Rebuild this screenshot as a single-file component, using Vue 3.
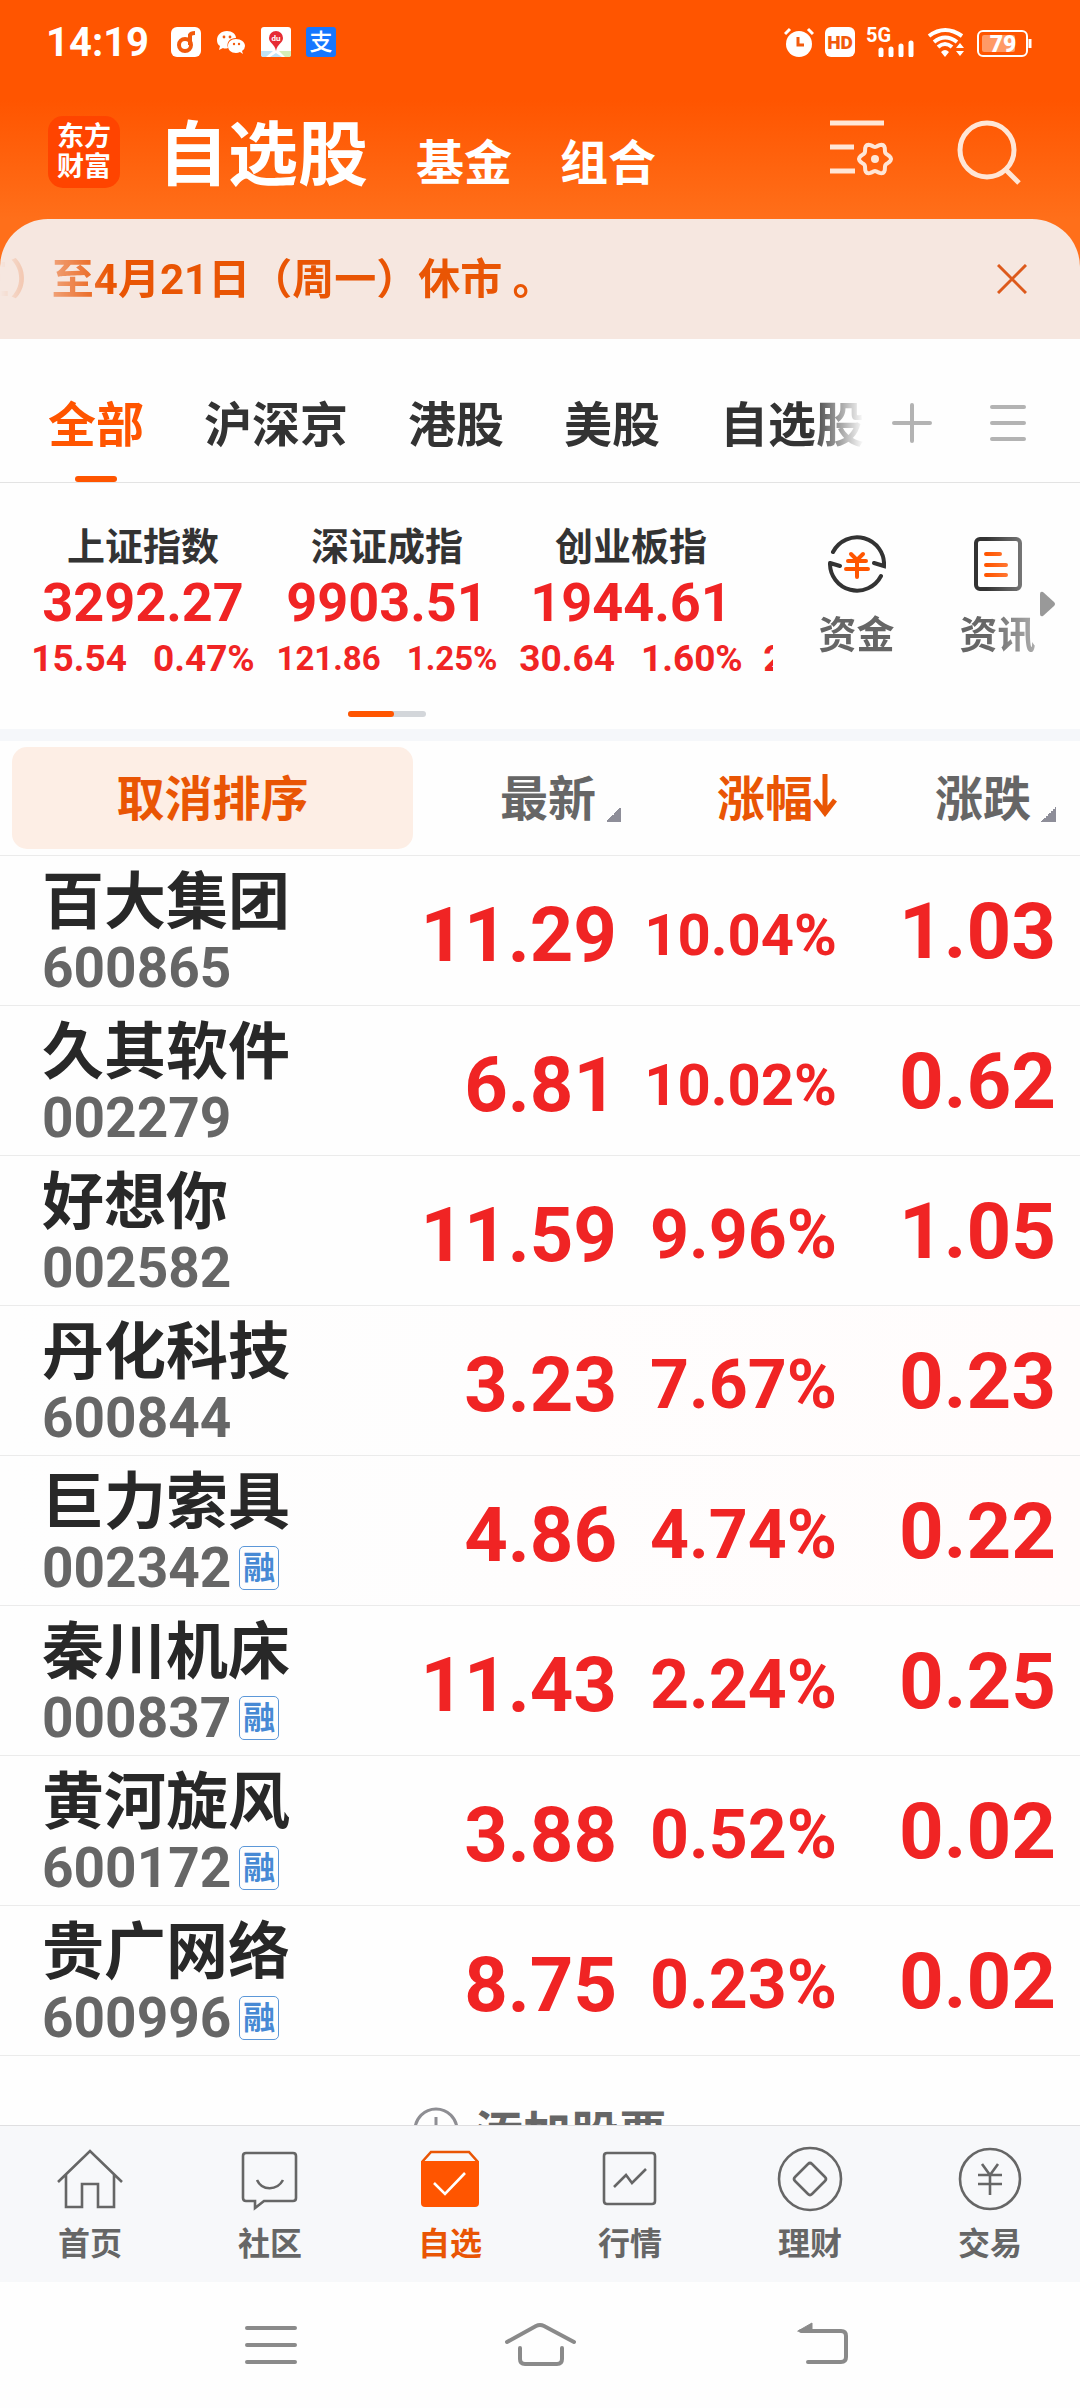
<script setup>
import { ref, computed } from 'vue'

const markets = ['全部', '沪深京', '港股', '美股', '自选股']
const activeMarket = ref('全部')

const indices = [
  { name: '上证指数', value: '3292.27', change: '15.54', percent: '0.47%' },
  { name: '深证成指', value: '9903.51', change: '121.86', percent: '1.25%' },
  { name: '创业板指', value: '1944.61', change: '30.64', percent: '1.60%' },
  { name: '', value: '', change: '22.58', percent: '0.26%' }
]

const stocks = [
  { name: '百大集团', code: '600865', price: '11.29', percent: '10.04%', change: '1.03' },
  { name: '久其软件', code: '002279', price: '6.81', percent: '10.02%', change: '0.62' },
  { name: '好想你', code: '002582', price: '11.59', percent: '9.96%', change: '1.05' },
  { name: '丹化科技', code: '600844', price: '3.23', percent: '7.67%', change: '0.23', flash: true },
  { name: '巨力索具', code: '002342', price: '4.86', percent: '4.74%', change: '0.22', margin: true, flash: true },
  { name: '秦川机床', code: '000837', price: '11.43', percent: '2.24%', change: '0.25', margin: true },
  { name: '黄河旋风', code: '600172', price: '3.88', percent: '0.52%', change: '0.02', margin: true },
  { name: '贵广网络', code: '600996', price: '8.75', percent: '0.23%', change: '0.02', margin: true }
]

const activePage = ref('自选')
const pages = [
  { name: '首页', d: 'M1 36L33 5L65 36M9 29V61H25V38H41V61H57V29' },
  { name: '社区', d: 'M9 7H56Q59 7 59 10V52Q59 55 56 55H27L18 62V55H9Q6 55 6 52V10Q6 7 9 7ZM20 34C25 45 40 45 46 34' },
  { name: '自选', d: 'M5 16L14 6H52L61 16', fill: 'M4 15H62V57Q62 61 58 61H8Q4 61 4 57Z', check: 'M17 37L28 48L48 27' },
  { name: '行情', d: 'M10 7H55Q58 7 58 10V55Q58 58 55 58H10Q7 58 7 55V10Q7 7 10 7ZM17 41L29 29L35 37L49 23' },
  { name: '理财', d: 'M33 2A31 31 0 1 1 33 64A31 31 0 1 1 33 2ZM31 18Q33 16 35 18L48 31Q50 33 48 35L35 48Q33 50 31 48L18 35Q16 33 18 31Z' },
  { name: '交易', d: 'M33 3A30 30 0 1 1 33 63A30 30 0 1 1 33 3ZM25 18L33 29L41 18M21 29H45M21 38H45M33 29V49' }
]

// six-lobed gear of the list settings icon
const gearPath = computed(() => {
  const points = []
  for (let a = 0; a < 360; a += 6) {
    const t = (a * Math.PI) / 180
    const r = 14 + 2 * Math.cos(6 * t)
    points.push(`${(45 + r * Math.cos(t)).toFixed(1)} ${(40 + r * Math.sin(t)).toFixed(1)}`)
  }
  return `M${points.join('L')}Z`
})
</script>

<template>
  <div class="app">
    <header class="top">
      <div class="status">
        <span class="clock">14:19</span>
        <div class="notices">
          <svg width="30" height="30" viewBox="0 0 30 30">
            <rect width="30" height="30" rx="6" fill="#fff" />
            <circle cx="14" cy="18" r="6" fill="none" stroke="#f25a0c" stroke-width="4" />
            <path d="M19 18V8Q20 6 24 6" fill="none" stroke="#f25a0c" stroke-width="4" />
          </svg>
          <svg width="30" height="30" viewBox="0 0 30 30">
            <path d="M11 4C5 4 1 8 1 13C1 16 2 18 4 19L3 23L7 21Q9 22 12 21C10 15 14 11 20 11C20 7 16 4 11 4Z" fill="#fff" />
            <path d="M20 12C15 12 12 15 12 19C12 23 15 26 20 26Q22 26 24 25L27 27L26 24Q29 22 29 19C29 15 25 12 20 12Z" fill="#fff" />
            <g fill="#f25a0c">
              <circle cx="8" cy="10" r="1.4" />
              <circle cx="14" cy="10" r="1.4" />
              <circle cx="18" cy="17" r="1.2" />
              <circle cx="23" cy="17" r="1.2" />
            </g>
          </svg>
          <svg width="30" height="30" viewBox="0 0 30 30">
            <rect width="30" height="30" rx="3" fill="#fff" />
            <path d="M0 24H12L5 30H2Q0 30 0 28Z" fill="#bfe3f7" />
            <path d="M18 24H30V28Q30 30 28 30H24Z" fill="#d5efb8" />
            <path d="M15 26L21 30H9Z" fill="#bfe3f7" />
            <path d="M15 4A7 7 0 0 1 22 11C22 16 16 17 15 24C14 17 8 16 8 11A7 7 0 0 1 15 4Z" fill="#e62b34" />
            <text x="15" y="14" text-anchor="middle" font-size="8" fill="#fff">du</text>
          </svg>
          <svg width="30" height="30" viewBox="0 0 30 30">
            <rect width="30" height="30" rx="3" fill="#1677ff" />
            <text x="15" y="23" text-anchor="middle" font-size="23" font-weight="500" fill="#fff">支</text>
          </svg>
        </div>
        <div class="signals">
          <svg width="30" height="30" viewBox="0 0 30 30">
            <circle cx="15" cy="17" r="13" fill="#fff" />
            <path d="M1 7L6 2M24 2L29 7" stroke="#fff" stroke-width="3" />
            <path d="M14 10V18H20" fill="none" stroke="#f25a0c" stroke-width="3" />
          </svg>
          <svg width="30" height="30" viewBox="0 0 30 30">
            <rect width="30" height="30" rx="6" fill="#fff" />
            <text x="15" y="22" text-anchor="middle" font-size="19" font-weight="900" fill="#f25a0c">HD</text>
          </svg>
          <svg width="50" height="30" viewBox="0 0 50 30">
            <text x="0" y="15" font-size="20" font-weight="700" fill="#fff">5G</text>
            <path d="M15 23V28M25 22V28M35 19V28M45 16V28" stroke="#fff" stroke-width="5" stroke-linecap="round" />
          </svg>
          <svg width="38" height="30" viewBox="0 0 38 30">
            <path d="M2 9Q18 -3 35 9M7 15Q18 6 30 15M11 20Q18 14 25 20" fill="none" stroke="#fff" stroke-width="4" />
            <path d="M14 25Q18 21 22 25L18 30ZM29 21L33 16L37 21ZM29 24L33 29L37 24Z" fill="#fff" />
          </svg>
          <svg width="56" height="30" viewBox="0 0 56 30">
            <rect x="2" y="4" width="49" height="25" rx="5" fill="none" stroke="#fff" stroke-width="2" />
            <rect x="6" y="8" width="33" height="17" rx="2" fill="#ff9a66" />
            <path d="M54 12V21" stroke="#fff" stroke-width="3" />
            <text x="27" y="25" text-anchor="middle" font-size="23" font-weight="900" fill="#fff">79</text>
          </svg>
        </div>
      </div>

      <div class="title-bar">
        <div class="logo">东方<br />财富</div>
        <nav class="sections">
          <a href="#" class="current">自选股</a>
          <a href="#">基金</a>
          <a href="#">组合</a>
        </nav>
        <button class="icon-btn" aria-label="设置">
          <svg width="66" height="66" viewBox="0 0 66 66" fill="none" stroke="#ffe6d6">
            <path d="M0 4H54M0 28H24M0 52H25" stroke-width="5" />
            <path :d="gearPath" stroke-width="4" />
            <circle cx="45" cy="40" r="4" fill="#ffe6d6" stroke="none" />
          </svg>
        </button>
        <button class="icon-btn" aria-label="搜索">
          <svg width="66" height="66" viewBox="0 0 66 66" fill="none" stroke="#ffe6d6" stroke-width="5">
            <circle cx="31" cy="31" r="27" />
            <path d="M49 50L63 64" />
          </svg>
        </button>
      </div>
    </header>

    <div class="notice-wrap">
      <div class="notice">
        <div class="marquee"><span>五）至4月21日（周一）休市 。</span></div>
        <button class="icon-btn" aria-label="关闭">
          <svg width="30" height="30" viewBox="0 0 30 30" stroke="#dd5a1c" stroke-width="3">
            <path d="M1 1L29 29M29 1L1 29" />
          </svg>
        </button>
      </div>
    </div>

    <div class="markets">
      <nav class="market-tabs">
        <button
          v-for="market in markets"
          :key="market"
          :class="{ active: market === activeMarket }"
          @click="activeMarket = market"
        >{{ market }}</button>
      </nav>
      <button class="icon-btn" aria-label="添加分组">
        <svg width="40" height="40" viewBox="0 0 40 40" stroke="#b3b3b3" stroke-width="4" stroke-linecap="round">
          <path d="M2 20H38M20 2V38" />
        </svg>
      </button>
      <button class="icon-btn" aria-label="分组管理">
        <svg width="40" height="40" viewBox="0 0 40 40" stroke="#b3b3b3" stroke-width="4" stroke-linecap="round">
          <path d="M4 4H36M4 20H36M4 36H36" />
        </svg>
      </button>
    </div>

    <section class="overview">
      <div class="indices">
        <div class="index-list">
          <div v-for="item in indices" :key="item.change" class="index">
            <div class="index-name">{{ item.name }}</div>
            <div class="index-value">{{ item.value }}</div>
            <div class="index-change" :class="{ small: item.change.length > 5 }">
              <span>{{ item.change }}</span>
              <span>{{ item.percent }}</span>
            </div>
          </div>
        </div>
        <div class="pager"><i></i></div>
      </div>
      <div class="shortcuts">
        <a href="#">
          <svg width="58" height="58" viewBox="0 0 58 58" fill="none" stroke="#333" stroke-width="4" stroke-linecap="round">
            <path d="M5 17A27 27 0 0 1 56 31L46 28M2 28A27 27 0 0 0 53 41M2 28L12 31" />
            <path d="M23 19L29 25L35 19M20 26H38M18 34H40M29 26V42" stroke="#ff5500" />
          </svg>
          资金
        </a>
        <a href="#">
          <svg width="58" height="58" viewBox="0 0 58 58" fill="none" stroke="#333" stroke-width="4" stroke-linecap="round">
            <rect x="7" y="4" width="44" height="50" rx="4" />
            <path d="M17 19H31M17 30H37M17 40H37" stroke="#ff5500" />
          </svg>
          资讯
        </a>
      </div>
      <svg class="more" width="16" height="26" viewBox="0 0 16 26">
        <path d="M0 3Q0 0 3 1L14 11Q16 13 14 15L3 25Q0 26 0 23Z" fill="#999" />
      </svg>
    </section>

    <main class="list">
      <table>
        <thead>
          <tr>
            <th class="col-name"><button class="reset">取消排序</button></th>
            <th class="col-price"><button class="sort">最新<i></i></button></th>
            <th class="col-percent">
              <button class="sort sorted">涨幅<svg width="24" height="44" viewBox="0 0 24 44" fill="none" stroke="#e95504" stroke-width="5">
                <path d="M12 1V40M2 27L12 40L22 27" />
              </svg></button>
            </th>
            <th class="col-change"><button class="sort">涨跌<i></i></button></th>
          </tr>
        </thead>
        <tbody>
          <tr v-for="stock in stocks" :key="stock.code" :class="{ flash: stock.flash }">
            <td class="col-name">
              <div class="stock-name">{{ stock.name }}</div>
              <div class="stock-code">
                {{ stock.code }}<span v-if="stock.margin" class="badge">融</span>
              </div>
            </td>
            <td class="col-price">{{ stock.price }}</td>
            <td class="col-percent" :class="{ long: stock.percent.length > 5 }">{{ stock.percent }}</td>
            <td class="col-change">{{ stock.change }}</td>
          </tr>
        </tbody>
      </table>
      <button class="add">
        <svg width="46" height="46" viewBox="0 0 46 46" fill="none" stroke="#8e8e93" stroke-width="3">
          <circle cx="23" cy="23" r="21" />
          <path d="M23 10V36M10 23H36" />
        </svg>
        添加股票
      </button>
    </main>

    <nav class="pages">
      <a
        v-for="page in pages"
        :key="page.name"
        href="#"
        :class="{ active: page.name === activePage }"
        @click.prevent="activePage = page.name"
      >
        <svg width="66" height="66" viewBox="0 0 66 66" fill="none" stroke="currentColor" stroke-width="2.6">
          <path :d="page.d" />
          <path v-if="page.fill" :d="page.fill" fill="#ff5500" stroke="none" />
          <path v-if="page.check" :d="page.check" stroke="#fff" />
        </svg>
        {{ page.name }}
      </a>
    </nav>

    <div class="system">
      <button class="icon-btn" aria-label="最近任务">
        <svg width="80" height="50" viewBox="0 0 80 50">
          <path d="M16 8H64M16 25H64M16 42H64" />
        </svg>
      </button>
      <button class="icon-btn" aria-label="主屏幕">
        <svg width="80" height="50" viewBox="0 0 80 50">
          <path d="M7 22L36 6Q40 4 44 6L74 22M20 28V39Q20 44 25 44H57Q62 44 62 39V28" />
        </svg>
      </button>
      <button class="icon-btn" aria-label="返回">
        <svg width="80" height="50" viewBox="0 0 80 50">
          <path d="M32 11H72Q77 11 77 16V37Q77 42 72 42H39" />
          <path d="M29 11L43 3V11Z" fill="#8a8a8a" stroke-width="1" />
        </svg>
      </button>
    </div>
  </div>
</template>

<style>
body {
  background: #fefefe;
}
</style>

<style scoped>
.app {
  display: flex;
  flex-direction: column;
  height: 100vh;
  overflow: hidden;
  font-family: Roboto, "Noto Sans CJK SC", sans-serif;
  font-weight: 700;
  color: #333;
  background: #fefefe;
}

button {
  margin: 0;
  padding: 0;
  border: 0;
  background: none;
  font: inherit;
  color: inherit;
}

a {
  color: inherit;
  text-decoration: none;
}

svg {
  display: block;
  flex: none;
}

.top {
  background: linear-gradient(#ff5500 0, #ff5500 100px, #ff6f1a 219px);
  color: #fff;
}

.status {
  display: flex;
  align-items: center;
  height: 84px;
  padding: 0 48px 0 46px;
}

.clock {
  font-size: 40px;
}

.notices {
  display: flex;
  gap: 15px;
  margin-left: 22px;
}

.signals {
  display: flex;
  gap: 11px;
  margin-left: auto;
}

.title-bar {
  display: flex;
  align-items: center;
  height: 135px;
  padding: 0 58px 0 48px;
}

.logo {
  display: flex;
  align-items: center;
  justify-content: center;
  width: 72px;
  height: 72px;
  border-radius: 15px;
  background: #ff4400;
  font-size: 27px;
  line-height: 30px;
}

.sections {
  display: flex;
  align-items: baseline;
  flex: 1;
  gap: 48px;
  margin-left: 38px;
  padding-top: 8px;
  font-size: 48px;
}

.sections .current {
  font-size: 70px;
  line-height: 84px;
}

.title-bar .icon-btn + .icon-btn {
  margin-left: 60px;
}

.notice-wrap {
  background: #ff6f1a;
}

.notice {
  display: flex;
  align-items: center;
  justify-content: space-between;
  height: 120px;
  padding-right: 53px;
  border-radius: 48px 48px 0 0;
  background: #f6e7e0;
  color: #e95504;
  font-size: 42px;
}

.marquee {
  display: flex;
  justify-content: flex-end;
  width: 54%;
  padding-bottom: 8px;
  overflow: hidden;
  white-space: nowrap;
  mask-image: linear-gradient(to right, transparent, #000 110px);
}

.markets {
  display: flex;
  align-items: center;
  padding-right: 52px;
  border-bottom: 1px solid #e3e3e3;
}

.market-tabs {
  display: flex;
  flex: 1;
  gap: 60px;
  padding-left: 48px;
  overflow: hidden;
  mask-image: linear-gradient(to left, transparent, #000 54px);
}

.market-tabs button {
  position: relative;
  flex: none;
  height: 143px;
  padding-top: 20px;
  font-size: 48px;
  white-space: nowrap;
}

.market-tabs .active {
  color: #ff5500;
}

.market-tabs .active::after {
  content: "";
  position: absolute;
  bottom: 0;
  left: 50%;
  width: 42px;
  height: 6px;
  margin-left: -21px;
  border-radius: 3px;
  background: #ff5500;
}

.markets .icon-btn {
  padding-top: 24px;
  margin-left: 28px;
}

.markets .icon-btn + .icon-btn {
  margin-left: 56px;
}

.overview {
  display: flex;
  align-items: center;
  height: 246px;
  border-bottom: 12px solid #f5f7fa;
}

.indices {
  flex: 0 0 773px;
  padding-top: 28px;
  overflow: hidden;
}

.index-list {
  display: flex;
  padding-left: 21px;
}

.index {
  flex: 0 0 244px;
  text-align: center;
  white-space: nowrap;
}

.index-name {
  height: 48px;
  font-size: 38px;
  line-height: 48px;
}

.index-value {
  height: 64px;
  color: #f02424;
  font-size: 54px;
  line-height: 64px;
}

.index-change {
  display: flex;
  align-items: baseline;
  justify-content: center;
  gap: 26px;
  color: #f02424;
  font-size: 37px;
  line-height: 48px;
}

.index-change.small {
  font-size: 33px;
}

.pager {
  width: 78px;
  height: 6px;
  margin: 28px auto 0;
  border-radius: 3px;
  background: #d3d6da;
}

.pager i {
  display: block;
  width: 60%;
  height: 6px;
  border-radius: 3px;
  background: #ff5500;
}

.shortcuts {
  display: flex;
  flex: 1;
  padding: 0 0 18px 13px;
  overflow: hidden;
  mask-image: linear-gradient(to right, #000 80%, rgba(0, 0, 0, 0.5));
}

.shortcuts a {
  display: flex;
  flex-direction: column;
  align-items: center;
  flex: 0 0 141px;
  gap: 18px;
  color: #666;
  font-size: 38px;
  line-height: 48px;
}

.more {
  margin: 0 24px 4px 0;
}

.list {
  flex: 1;
  min-height: 0;
  overflow: hidden;
}

table {
  width: 100%;
  border-collapse: collapse;
  table-layout: fixed;
}

th,
td {
  padding: 0;
  border-bottom: 1px solid #ebebeb;
  text-align: right;
  white-space: nowrap;
}

th {
  height: 114px;
  color: #666;
  font-size: 48px;
}

td {
  height: 149px;
  color: #f02424;
  font-size: 76px;
  line-height: 88px;
}

th.col-name {
  width: 38.5%;
}

th.col-price {
  width: 19%;
}

th.col-percent {
  width: 20%;
}

.col-change {
  padding-right: 24px;
}

td.col-change {
  padding-top: 2px;
  height: 147px;
  font-size: 78px;
}

td.col-price,
td.col-percent {
  padding-top: 8px;
  height: 141px;
}

td.col-price {
  padding-right: 4px;
}

td.col-percent {
  font-size: 68px;
}

td.col-percent.long {
  font-size: 58px;
}

.reset {
  display: block;
  width: 401px;
  height: 102px;
  margin-left: 12px;
  padding-bottom: 6px;
  border-radius: 15px;
  background: #fdeee5;
  color: #e95504;
}

.sort {
  display: inline-flex;
  align-items: center;
  padding-bottom: 6px;
}

.sort i {
  align-self: flex-end;
  width: 15px;
  height: 15px;
  margin: 0 0 8px 10px;
  background: linear-gradient(135deg, transparent 50%, #8e8e99 50%);
}

.sorted {
  color: #e95504;
}

td.col-name {
  padding-left: 42px;
  text-align: left;
}

.stock-name {
  color: #282828;
  font-size: 62px;
  line-height: 74px;
}

.stock-code {
  display: flex;
  align-items: center;
  gap: 8px;
  color: #666;
  font-size: 55px;
  line-height: 56px;
}

.badge {
  width: 38px;
  border: 1px solid #5b97d8;
  border-radius: 5px;
  color: #4689d4;
  font-size: 32px;
  line-height: 42px;
  text-align: center;
}

.flash {
  background: linear-gradient(to right, transparent, #fffcfc);
}

.add {
  display: flex;
  align-items: center;
  justify-content: center;
  gap: 16px;
  width: 100%;
  height: 148px;
  color: #666;
  font-size: 48px;
}

.pages {
  display: flex;
  border-top: 1px solid #dfdfe1;
  background: #f7f8fa;
}

.pages a {
  display: flex;
  flex-direction: column;
  align-items: center;
  flex: 1;
  gap: 12px;
  padding: 20px 0 18px;
  color: #666;
  font-size: 32px;
  line-height: 40px;
}

.pages .active {
  color: #e95504;
}

.system {
  display: flex;
  justify-content: space-around;
  align-items: center;
  height: 126px;
  padding: 0 136px;
}

.system svg {
  fill: none;
  stroke: #8a8a8a;
  stroke-width: 4;
  stroke-linecap: round;
}
</style>
